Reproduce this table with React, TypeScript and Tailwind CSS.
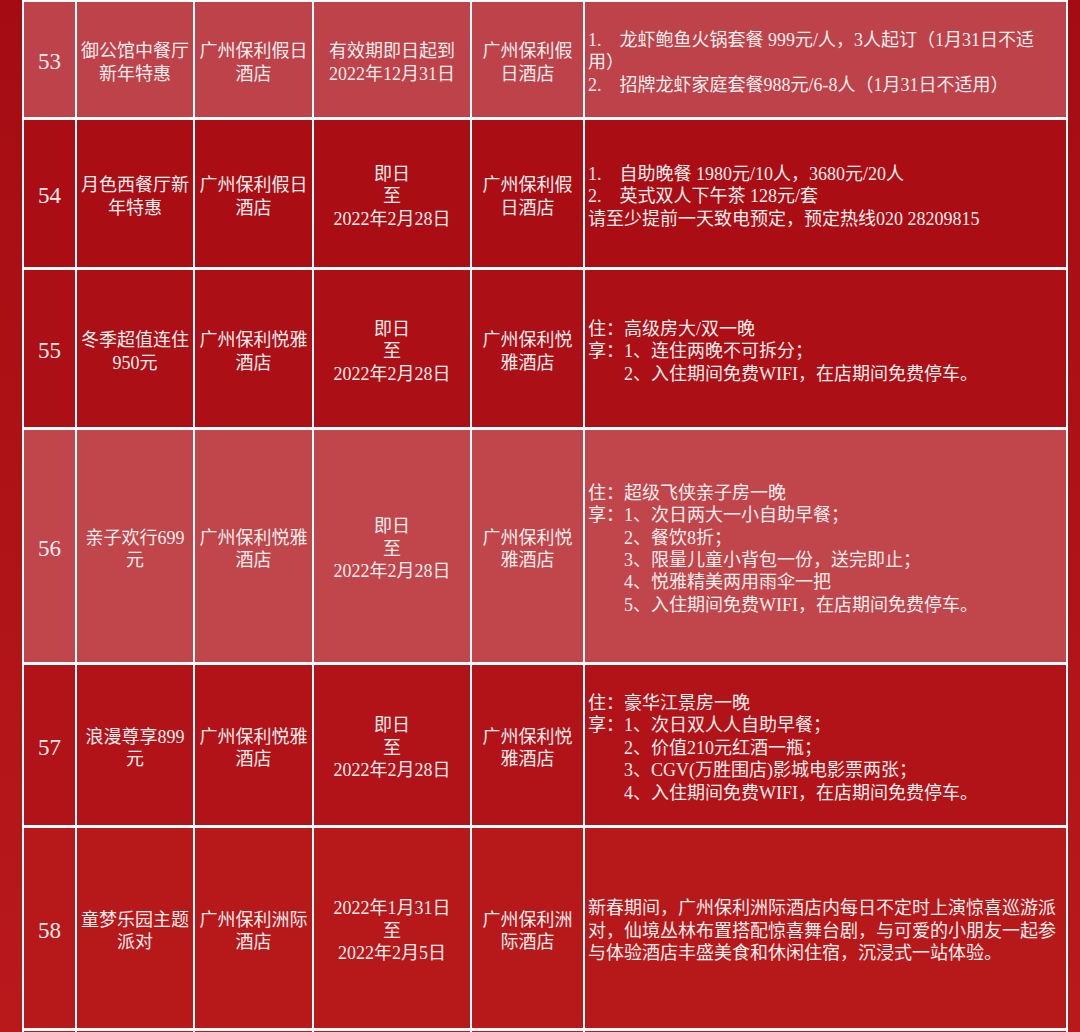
const font = { fontFamily: '"Liberation Serif", "Noto Sans CJK SC", serif' };

type Row = {
  no: string;
  name: string[];
  hotel: string[];
  date: string[];
  venue: string[];
  detail: string[];
  bg: string;
};

const rows: Row[] = [
  {
    no: "53",
    name: ["御公馆中餐厅", "新年特惠"],
    hotel: ["广州保利假日", "酒店"],
    date: ["有效期即日起到", "2022年12月31日"],
    venue: ["广州保利假", "日酒店"],
    detail: [
      "1.\u3000龙虾鲍鱼火锅套餐 999元/人，3人起订（1月31日不适",
      "用）",
      "2.\u3000招牌龙虾家庭套餐988元/6-8人（1月31日不适用）",
    ],
    bg: "bg-[#bd424a]",
  },
  {
    no: "54",
    name: ["月色西餐厅新", "年特惠"],
    hotel: ["广州保利假日", "酒店"],
    date: ["即日", "至", "2022年2月28日"],
    venue: ["广州保利假", "日酒店"],
    detail: [
      "1.\u3000自助晚餐 1980元/10人，3680元/20人",
      "2.\u3000英式双人下午茶 128元/套",
      "请至少提前一天致电预定，预定热线020 28209815",
    ],
    bg: "bg-[#aa0d14]",
  },
  {
    no: "55",
    name: ["冬季超值连住", "950元"],
    hotel: ["广州保利悦雅", "酒店"],
    date: ["即日", "至", "2022年2月28日"],
    venue: ["广州保利悦", "雅酒店"],
    detail: [
      "住：高级房大/双一晚",
      "享：1、连住两晚不可拆分；",
      "\u3000\u30002、入住期间免费WIFI，在店期间免费停车。",
    ],
    bg: "bg-[#ac0f15]",
  },
  {
    no: "56",
    name: ["亲子欢行699", "元"],
    hotel: ["广州保利悦雅", "酒店"],
    date: ["即日", "至", "2022年2月28日"],
    venue: ["广州保利悦", "雅酒店"],
    detail: [
      "住：超级飞侠亲子房一晚",
      "享：1、次日两大一小自助早餐；",
      "\u3000\u30002、餐饮8折；",
      "\u3000\u30003、限量儿童小背包一份，送完即止；",
      "\u3000\u30004、悦雅精美两用雨伞一把",
      "\u3000\u30005、入住期间免费WIFI，在店期间免费停车。",
    ],
    bg: "bg-[#c0464b]",
  },
  {
    no: "57",
    name: ["浪漫尊享899", "元"],
    hotel: ["广州保利悦雅", "酒店"],
    date: ["即日", "至", "2022年2月28日"],
    venue: ["广州保利悦", "雅酒店"],
    detail: [
      "住：豪华江景房一晚",
      "享：1、次日双人人自助早餐；",
      "\u3000\u30002、价值210元红酒一瓶；",
      "\u3000\u30003、CGV(万胜围店)影城电影票两张；",
      "\u3000\u30004、入住期间免费WIFI，在店期间免费停车。",
    ],
    bg: "bg-[#b11318]",
  },
  {
    no: "58",
    name: ["童梦乐园主题", "派对"],
    hotel: ["广州保利洲际", "酒店"],
    date: ["2022年1月31日", "至", "2022年2月5日"],
    venue: ["广州保利洲", "际酒店"],
    detail: [
      "新春期间，广州保利洲际酒店内每日不定时上演惊喜巡游派",
      "对，仙境丛林布置搭配惊喜舞台剧，与可爱的小朋友一起参",
      "与体验酒店丰盛美食和休闲住宿，沉浸式一站体验。",
    ],
    bg: "bg-[#b7181a]",
  },
];

function Lines({ lines }: { lines: string[] }) {
  return (
    <div>
      {lines.map((l, i) => (
        <div key={i} className="whitespace-pre">
          {l}
        </div>
      ))}
    </div>
  );
}

export default function App() {
  const center = "flex items-center justify-center text-center pt-[6px]";
  return (
    <div
      style={font}
      className="w-[1080px] h-[1032px] overflow-hidden bg-gradient-to-b from-[#a50b13] to-[#b9191b] pl-[22px] text-[#f7eded] text-[18px] leading-[22.4px]"
    >
      <div className="grid w-[1046px] grid-cols-[51px_116px_117px_156px_111px_481px] grid-rows-[115px_147px_157px_232px_160px_200px_100px] gap-x-[2px] gap-y-[3px] bg-white p-[2px]">
        {rows.map((r) => (
          <div key={r.no} className="contents">
            <div className={`${center} ${r.bg} text-[23px]`}>{r.no}</div>
            <div className={`${center} ${r.bg}`}>
              <Lines lines={r.name} />
            </div>
            <div className={`${center} ${r.bg}`}>
              <Lines lines={r.hotel} />
            </div>
            <div className={`${center} ${r.bg}`}>
              <Lines lines={r.date} />
            </div>
            <div className={`${center} ${r.bg}`}>
              <Lines lines={r.venue} />
            </div>
            <div className={`flex items-center ${r.bg} pl-[3px] pt-[6px] text-left`}>
              <Lines lines={r.detail} />
            </div>
          </div>
        ))}
        <div className="bg-[#ba191b]" />
        <div className="bg-[#ba191b]" />
        <div className="bg-[#ba191b]" />
        <div className="bg-[#ba191b]" />
        <div className="bg-[#ba191b]" />
        <div className="bg-[#ba191b]" />
      </div>
    </div>
  );
}
